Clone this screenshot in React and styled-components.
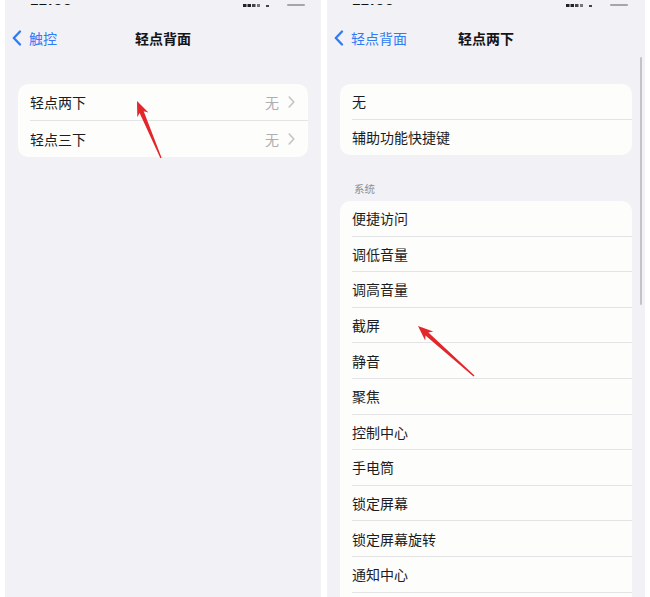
import React from "react";
import styled, { createGlobalStyle } from "styled-components";

const GlobalStyle = createGlobalStyle`
  html, body { margin: 0; padding: 0; background: #ffffff; }
  body { font-family: "Noto Sans CJK SC", "Noto Sans", sans-serif; -webkit-font-smoothing: antialiased; }
  * { box-sizing: border-box; }
`;

const Stage = styled.div`
  position: relative;
  display: flex;
  gap: 6px;
  padding: 0 5px;
  width: 650px;
  height: 597px;
  overflow: hidden;
  background: #ffffff;
`;

const Screen = styled.div`
  position: relative;
  width: ${(p) => p.$w}px;
  height: 597px;
  padding-top: 4px;
  background: #f1f1f6;
  overflow: hidden;
  display: flex;
  flex-direction: column;
`;

const StatusBar = styled.div`
  height: 3px;
  overflow: hidden;
  display: flex;
  align-items: flex-end;
  padding: 0 ${(p) => p.$right}px 0 ${(p) => p.$left}px;
  justify-content: space-between;
  flex-shrink: 0;
`;

const Time = styled.span`
  font-family: "Liberation Sans", sans-serif;
  font-weight: 700;
  font-size: 15px;
  line-height: 15px;
  color: #111;
  letter-spacing: 1px;
`;

const StatusIcons = styled.div`
  display: flex;
  align-items: flex-end;
  gap: 14px;
`;

const NavBar = styled.div`
  height: 62px;
  display: grid;
  grid-template-columns: 1fr auto 1fr;
  align-items: center;
  flex-shrink: 0;
`;

const BackButton = styled.div`
  display: flex;
  align-items: center;
  gap: 7px;
  padding-left: 7px;
  color: #2f7bf5;
  font-size: 14px;
  line-height: 20px;
`;

const Title = styled.div`
  font-size: 14px;
  font-weight: 700;
  color: #141416;
  line-height: 20px;
`;

const Group = styled.div`
  margin: ${(p) => p.$top || 0}px 13px 0 13px;
  padding-bottom: ${(p) => p.$tail || 0}px;
  background: #fdfdfb;
  border-radius: 10px;
  overflow: hidden;
  flex-shrink: 0;
`;

const Row = styled.div`
  height: ${(p) => p.$h}px;
  padding-left: 13px;
  display: flex;
`;

const RowInner = styled.div`
  flex: 1;
  display: flex;
  align-items: center;
  justify-content: space-between;
  padding-right: 13px;
  margin-left: -1px;
  border-bottom: ${(p) => (p.$last ? "none" : "1px solid #e4e4e7")};
`;

const Label = styled.span`
  font-size: 14px;
  color: #1c1c1e;
  line-height: 20px;
`;

const Detail = styled.span`
  display: flex;
  align-items: center;
  gap: 9px;
  font-size: 14px;
  color: #aeaeb2;
`;

const SectionHeader = styled.div`
  height: 46px;
  display: flex;
  align-items: flex-end;
  padding: 0 0 5px 27px;
  font-size: 10.5px;
  line-height: 14px;
  color: #8e8e93;
  flex-shrink: 0;
`;

const ScrollThumb = styled.div`
  position: absolute;
  right: 3px;
  top: 57px;
  width: 2.5px;
  height: 248px;
  border-radius: 2px;
  background: #c3c3c8;
`;

const Overlay = styled.svg`
  position: absolute;
  left: 0;
  top: 0;
  pointer-events: none;
`;

const BackChevron = () => (
  <svg width="10" height="16" viewBox="0 0 10 16">
    <path d="M8 1.5 L1.8 8 L8 14.5" fill="none" stroke="#2f7bf5" strokeWidth="2.3" strokeLinecap="round" strokeLinejoin="round" />
  </svg>
);

const RowChevron = () => (
  <svg width="7" height="12" viewBox="0 0 7 12">
    <path d="M1.2 1 L5.8 6 L1.2 11" fill="none" stroke="#c4c4c7" strokeWidth="1.6" strokeLinecap="round" strokeLinejoin="round" />
  </svg>
);

const Signal = () => (
  <svg width="30" height="3" viewBox="0 0 30 3">
    <rect x="0" y="0" width="3.5" height="3" fill="#222" />
    <rect x="4.5" y="0" width="3.5" height="3" fill="#222" />
    <rect x="9" y="0" width="3.5" height="3" fill="#444" />
    <rect x="14" y="0" width="3" height="3" fill="#777" />
    <rect x="23" y="1" width="3" height="2" fill="#444" />
  </svg>
);

const Battery = () => (
  <svg width="18" height="3" viewBox="0 0 18 3">
    <rect x="0" y="0" width="18" height="2" rx="1" fill="#a5a5aa" />
  </svg>
);

// Builds the outline of a markup arrow: a tapered shaft ending in a head at the tip.
function arrowPoints(tip, tail) {
  const dx = tail[0] - tip[0];
  const dy = tail[1] - tip[1];
  const len = Math.hypot(dx, dy);
  const ux = dx / len;
  const uy = dy / len;
  const nx = -uy;
  const ny = ux;
  const at = (d, w) => [tip[0] + ux * d + nx * w, tip[1] + uy * d + ny * w];
  const pts = [
    tip,
    at(15, 6),
    at(12, 2.2),
    [tail[0] + nx * 0.7, tail[1] + ny * 0.7],
    [tail[0] - nx * 0.7, tail[1] - ny * 0.7],
    at(12, -2.2),
    at(15, -6),
  ];
  return pts.map((p) => p.map((v) => v.toFixed(1)).join(",")).join(" ");
}

const leftRows = ["轻点两下", "轻点三下"];
const topChoices = ["无", "辅助功能快捷键"];
const systemActions = [
  "便捷访问",
  "调低音量",
  "调高音量",
  "截屏",
  "静音",
  "聚焦",
  "控制中心",
  "手电筒",
  "锁定屏幕",
  "锁定屏幕旋转",
  "通知中心",
];

export default function App() {
  return (
    <>
      <GlobalStyle />
      <Stage>
        <Screen $w={316}>
          <StatusBar $left={25} $right={16}>
            <Time>11:55</Time>
            <StatusIcons>
              <Signal />
              <Battery />
            </StatusIcons>
          </StatusBar>
          <NavBar>
            <BackButton>
              <BackChevron />
              触控
            </BackButton>
            <Title>轻点背面</Title>
            <div />
          </NavBar>
          <Group $top={15}>
            {leftRows.map((label, i) => (
              <Row key={label} $h={36.5}>
                <RowInner $last={i === leftRows.length - 1}>
                  <Label>{label}</Label>
                  <Detail>
                    无
                    <RowChevron />
                  </Detail>
                </RowInner>
              </Row>
            ))}
          </Group>
        </Screen>

        <Screen $w={318}>
          <StatusBar $left={25} $right={17}>
            <Time>11:55</Time>
            <StatusIcons>
              <Signal />
              <Battery />
            </StatusIcons>
          </StatusBar>
          <NavBar>
            <BackButton>
              <BackChevron />
              轻点背面
            </BackButton>
            <Title>轻点两下</Title>
            <div />
          </NavBar>
          <Group $top={15}>
            {topChoices.map((label, i) => (
              <Row key={label} $h={35.5}>
                <RowInner $last={i === topChoices.length - 1}>
                  <Label>{label}</Label>
                </RowInner>
              </Row>
            ))}
          </Group>
          <SectionHeader>系统</SectionHeader>
          <Group $tail={20}>
            {systemActions.map((label) => (
              <Row key={label} $h={35.6}>
                <RowInner>
                  <Label>{label}</Label>
                </RowInner>
              </Row>
            ))}
          </Group>
          <ScrollThumb />
        </Screen>

        <Overlay width="650" height="597" viewBox="0 0 650 597">
          <polygon points={arrowPoints([137, 101], [161, 158])} fill="#e3262b" />
          <polygon points={arrowPoints([418, 326], [474, 376])} fill="#e3262b" />
        </Overlay>
      </Stage>
    </>
  );
}
